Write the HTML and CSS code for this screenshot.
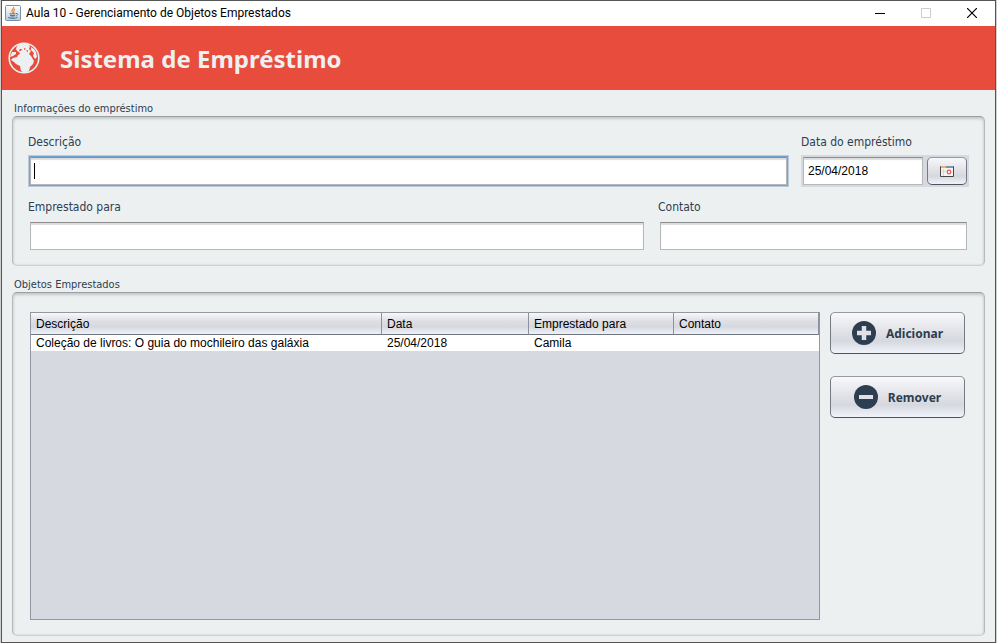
FILE: index.html
```html
<!DOCTYPE html>
<html lang="pt-BR">
<head>
<meta charset="utf-8">
<title>Aula 10 - Gerenciamento de Objetos Emprestados</title>
<link rel="stylesheet" href="styles.css">
</head>
<body>
<div class="window">
  <header class="titlebar">
    <svg class="java" width="16" height="16" viewBox="0 0 16 16" aria-hidden="true">
      <defs><linearGradient id="tile" x1="0" y1="0" x2="0" y2="1"><stop offset="0" stop-color="#fff"/><stop offset="1" stop-color="#b9cbdc"/></linearGradient></defs>
      <rect x=".5" y=".5" width="15" height="15" rx="1" fill="url(#tile)" stroke="#7890a8"/>
      <path d="M8.500 2C9.500 4 6 4.500 7 6.500L8 8M10 4C7.500 5.500 10 6 8.500 8" fill="none" stroke="#ee8a2c" stroke-width="1.200"/>
      <path d="M4.500 8.800H10.500M5 10.500H10M11 8.500C13.500 8 13 10.500 10.800 11M3 12.300C5 13.800 10.500 13.800 12.500 12.300M5.500 12H9.500" fill="none" stroke="#50789c" stroke-width="1"/>
    </svg>
    <span class="caption">Aula 10 - Gerenciamento de Objetos Emprestados</span>
    <button class="control" type="button" aria-label="Minimizar"><svg width="10" height="10" viewBox="0 0 10 10"><path d="M0 5.500H10" stroke="#000"/></svg></button>
    <button class="control" type="button" aria-label="Maximizar" disabled><svg width="10" height="10" viewBox="0 0 10 10"><path d="M.5 .5H9.500V9.500H.5Z" fill="none" stroke="#ccc"/></svg></button>
    <button class="control" type="button" aria-label="Fechar"><svg width="10" height="10" viewBox="0 0 10 10"><path d="M0 0L10 10M10 0L0 10" stroke="#000" stroke-width="1.200"/></svg></button>
  </header>

  <div class="banner">
    <svg width="32" height="32" viewBox="0 0 32 32" aria-hidden="true">
      <circle cx="16" cy="16" r="14.800" fill="none" stroke="#ecf0f1" stroke-width="1.600"/>
      <path d="M9 4L12 2L20 2L22 4L21 7L23 9L21 12L23 14L26 19L25 22L22 25L21 29L17 31L13 29L12 24L8 22L6 20L3 18L5 16L9 15L10 13L12 12L11 10L9 9L8 7Z" fill="#ecf0f1"/>
      <path d="M23 5L26 7L28 10L29 15L27 17L25 14L26 11L23 8ZM4 10L8 10L8 12L5 14L2 15Z" fill="#ecf0f1"/>
      <path d="M12 7L14 7L13 9L11 9ZM16 6L18 7L16 8ZM18 9L20 8L20 10Z" fill="#e84c3d"/>
    </svg>
    <h1>Sistema de Empréstimo</h1>
  </div>

  <main>
    <section class="group" aria-labelledby="loan-title">
      <h2 id="loan-title">Informações do empréstimo</h2>
      <form class="panel form">
        <div class="row">
          <div class="field description">
            <label for="description">Descrição</label>
            <div class="focus"><input id="description" type="text"><span class="caret"></span></div>
          </div>
          <div class="field date">
            <label for="date">Data do empréstimo</label>
            <div class="picker">
              <input id="date" type="text" value="25/04/2018">
              <button class="metal" type="button" aria-label="Abrir calendário">
                <svg width="14" height="11" viewBox="0 0 14 11"><path d="M.5 .5H13.500V10.500H.5Z" fill="#f6f3ee" stroke="#4a4745"/><path d="M1 1H6" stroke="#edb45d" stroke-width="2"/><path d="M6 1H13" stroke="#7994b5" stroke-width="2"/><path d="M3.500 3V10M6 5.500H1" stroke="#d8d8d8"/><circle cx="9" cy="6" r="1.800" fill="#fff" stroke="#e45750" stroke-width="1.200"/></svg>
              </button>
            </div>
          </div>
        </div>
        <div class="row people">
          <div class="field borrower">
            <label for="borrower">Emprestado para</label>
            <input id="borrower" type="text">
          </div>
          <div class="field contact">
            <label for="contact">Contato</label>
            <input id="contact" type="text">
          </div>
        </div>
      </form>
    </section>

    <section class="group objects" aria-labelledby="objects-title">
      <h2 id="objects-title">Objetos Emprestados</h2>
      <div class="panel content">
        <div class="table-area">
          <table>
            <colgroup><col class="c1"><col class="c2"><col class="c3"><col class="c4"></colgroup>
            <thead><tr><th>Descrição</th><th>Data</th><th>Emprestado para</th><th>Contato</th></tr></thead>
            <tbody><tr><td>Coleção de livros: O guia do mochileiro das galáxia</td><td>25/04/2018</td><td>Camila</td><td></td></tr></tbody>
          </table>
        </div>
        <div class="actions">
          <button class="metal" type="button"><svg width="24" height="24" viewBox="0 0 24 24" aria-hidden="true"><circle cx="12" cy="12" r="12" fill="#2c3e50"/><path d="M12 5V19M5 12H19" stroke="#dfe1e7" stroke-width="4.500"/></svg>Adicionar</button>
          <button class="metal" type="button"><svg width="24" height="24" viewBox="0 0 24 24" aria-hidden="true"><circle cx="12" cy="12" r="12" fill="#2c3e50"/><path d="M5 12H19" stroke="#dfe1e7" stroke-width="4"/></svg>Remover</button>
        </div>
      </div>
    </section>
  </main>
</div>
</body>
</html>
```
FILE: styles.css
```css
* { box-sizing: border-box; }
body {
  margin: 0;
  min-height: 100vh;
  display: flex;
  padding-left: 1px;
  padding-right: 1px;
  background: #cfcfcf;
  color: #2c3e50;
  font-family: "DejaVu Sans Condensed", "Noto Sans", sans-serif;
  font-size: 12px;
}
h1, h2 { margin: 0; }
svg { display: block; flex: none; }
.window {
  flex: 1;
  display: flex;
  flex-direction: column;
  border: 1px solid #555;
  background: #ecf0f1;
}
.titlebar {
  display: flex;
  align-items: center;
  height: 25px;
  padding: 0 0 1px 3px;
  background: #fff;
  color: #000;
}
.caption { flex: 1; padding-left: 5px; font-family: Roboto, "Open Sans", sans-serif; }
.control {
  width: 46px;
  height: 24px;
  display: grid;
  place-items: center;
  padding: 0;
  border: 0;
  background: none;
}
.banner {
  display: flex;
  align-items: center;
  gap: 20px;
  height: 64px;
  padding: 2px 6px;
  background: #e84c3d;
  color: #ecf0f1;
}
h1 { padding-top: 2px; font: bold 24px/32px "Noto Sans", sans-serif; }
main {
  flex: 1;
  display: flex;
  flex-direction: column;
  gap: 12px;
  padding: 12px 10px 6px;
}
h2 { padding-left: 2px; font-size: 11px; font-weight: normal; line-height: 14px; }
.panel {
  border: 1px solid;
  border-color: #9da0a1 #b5b9ba #cdd1d2;
  border-radius: 5px;
  box-shadow: inset 0 2px 3px #c4c8c9, inset 0 0 2px #c4c8c9;
}
.objects { flex: 1; display: flex; flex-direction: column; }
.form { padding: 16px 15px 15px; display: grid; gap: 11px; }
.row { display: flex; gap: 12px; }
.people { gap: 14px; padding-right: 2px; }
.field { display: flex; flex-direction: column; gap: 4px; }
.people .field { gap: 6px; padding-left: 2px; }
.people label { margin-left: -2px; }
label { line-height: 18px; }
input {
  width: 100%;
  height: 28px;
  padding: 0 4px;
  border: 1px solid #b8b8b8;
  border-top: 1px solid #8c8c8c;
  border-radius: 0;
  outline: 0;
  background: #fff;
  box-shadow: inset 0 2px 1px #ddd;
  color: #000;
  font: 12px "Liberation Sans", sans-serif;
}
.description { flex: 1; }
.focus { position: relative; padding: 1px; border: 1px solid #b5cbe2; background: #73a4d1; }
.focus input { display: block; }
.caret { position: absolute; left: 5px; top: 7px; width: 1px; height: 16px; background: #000; }
.date { width: 168px; }
.picker { display: flex; gap: 4px; padding: 2px; background: #d6d9e0; }
.picker input { flex: 1; min-width: 0; }
.metal {
  border: 1px solid;
  border-color: #96999f #777a81 #4f535a;
  border-radius: 5px;
  background: linear-gradient(#f8f8fa, #e2e3e8 45%, #d6d8df 70%, #f0f3fb);
  color: #2c3e50;
}
.picker .metal { width: 40px; height: 28px; padding: 0; display: grid; place-items: center; }
.borrower { flex: 2; }
.contact { flex: 1; }
.content { flex: 1; display: flex; gap: 10px; padding: 19px 19px 15px 17px; }
.table-area { flex: 1; border: 1px solid #9297a1; background: #d6d9e0; }
table {
  width: 100%;
  table-layout: fixed;
  border-collapse: separate;
  border-spacing: 0;
  color: #000;
  font: 12px/16px "Liberation Sans", sans-serif;
}
.c1 { width: 351px; }
.c2 { width: 147px; }
.c3 { width: 145px; }
th {
  height: 22px;
  padding: 0 5px;
  border-right: 1px solid #8c919b;
  border-bottom: 1px solid #6f757f;
  background: linear-gradient(#f8f8fa, #e0e1e6 35%, #d6d8df 65%, #eef1f8);
  font-weight: normal;
  text-align: left;
}
td { height: 16px; padding: 0 5px; background: #fff; white-space: nowrap; }
.actions { width: 135px; display: flex; flex-direction: column; gap: 22px; }
.actions .metal {
  height: 42px;
  display: flex;
  align-items: center;
  justify-content: center;
  gap: 10px;
  padding: 0;
  font: bold 12px "Noto Sans", sans-serif;
}
```
